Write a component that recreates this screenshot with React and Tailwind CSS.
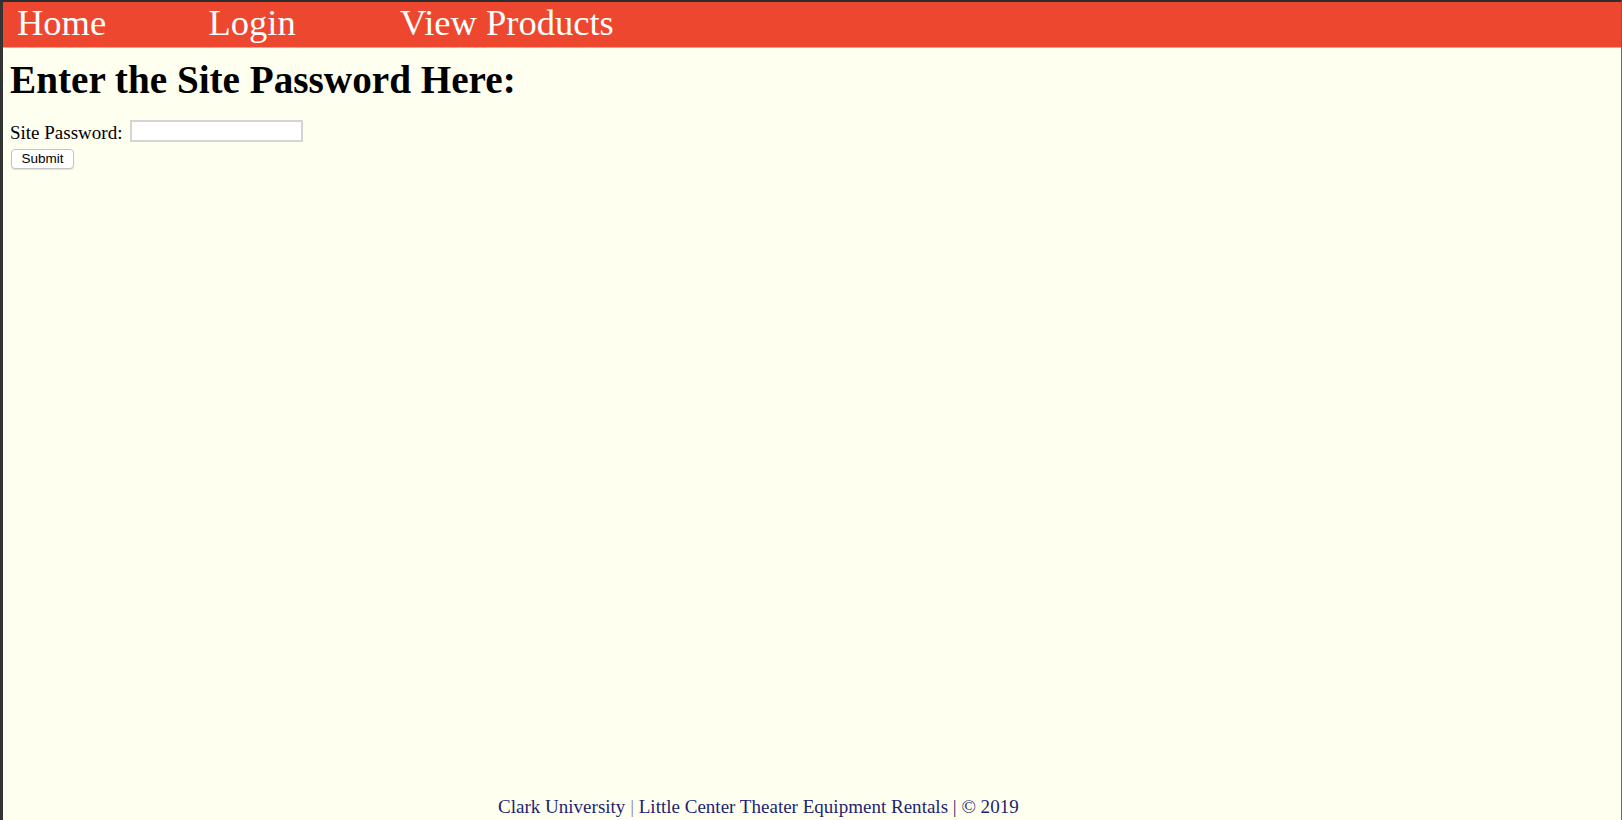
export default function App() {
  const serif = { fontFamily: '"Liberation Serif", "Times New Roman", serif' };
  return (
    <div
      className="flex h-[820px] w-full flex-col overflow-hidden border-t-2 border-l-[3px] border-r border-t-[#2e2e2e] border-l-[#333333] border-r-[#666666] bg-[#fffff0] text-black"
      style={serif}
    >
      <nav className="flex h-[46px] shrink-0 bg-[#ee4730] pl-[14px] border-b border-b-[#f6a090]">
        <a className="block w-[191.5px] text-[36.5px] leading-[41px] text-white" href="#">Home</a>
        <a className="block w-[191.5px] text-[36.5px] leading-[41px] text-white" href="#">Login</a>
        <a className="block text-[36.5px] leading-[41px] text-white" href="#">View Products</a>
      </nav>
      <main className="flex-1 pl-[7px]">
        <h1 className="mt-[10px] text-[39.2px] font-bold leading-[44px]">Enter the Site Password Here:</h1>
        <div className="mt-[18px] flex items-start">
          <span className="mt-[1.5px] text-[19px] leading-[22px]">Site Password:</span>
          <input
            type="password"
            className="ml-[8px] h-[22px] w-[173px] border-2 border-[#d4d4d4] bg-white outline-none"
          />
        </div>
        <button
          className="mt-[5px] ml-[1px] flex h-[20px] w-[63px] items-center justify-center rounded-[4px] border border-[#c4c4c4] bg-white text-[13.5px] leading-none text-black shadow-[0_1px_1px_rgba(0,0,0,0.12)]"
          style={{ fontFamily: '"Liberation Sans", Arial, sans-serif' }}
        >
          Submit
        </button>
      </main>
      <footer className="shrink-0 pb-[2px] pl-[495px] text-[19.05px] leading-[22px] text-[#1c1f72]">
        Clark University <span className="text-[#7d84ac]">|</span> Little Center Theater Equipment Rentals | © 2019
      </footer>
    </div>
  );
}
